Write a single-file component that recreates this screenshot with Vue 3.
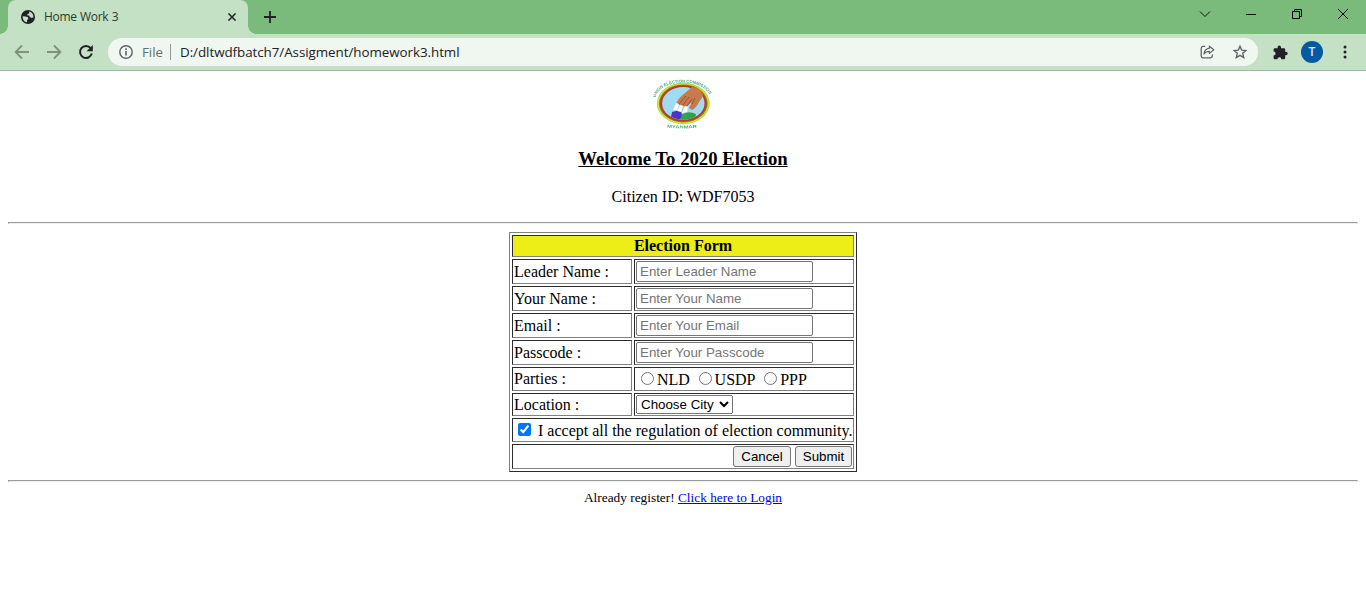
<script setup>
import { ref } from 'vue'

const fields = [
  { label: 'Leader Name :', hint: 'Enter Leader Name', type: 'text' },
  { label: 'Your Name :', hint: 'Enter Your Name', type: 'text' },
  { label: 'Email :', hint: 'Enter Your Email', type: 'email' },
  { label: 'Passcode :', hint: 'Enter Your Passcode', type: 'password' },
]
const parties = ['NLD', 'USDP', 'PPP']
const accepted = ref(true)
</script>

<template>
  <div class="window">
    <header class="tabstrip">
      <div class="tab">
        <svg class="globe" width="14" height="14" viewBox="0 0 14 14">
          <circle cx="7" cy="7" r="7" fill="#202124" />
          <path d="M1.7 6.2 L4.8 6.4 L6.9 7.2 L7.4 9 L6.2 9.8 L6 12.3 C3.4 11.9 1.5 9.6 1.7 6.2Z" fill="#c5e1c5" />
          <path d="M8.2 1.6 C11 2.2 12.5 4.6 12.4 7.2 L10.8 8.1 L8.8 7 L8.2 5.6 L6.2 5.3 L6.4 3.9 L8.2 3.4Z" fill="#c5e1c5" />
        </svg>
        <span class="tab-title">Home Work 3</span>
        <svg class="close" width="8" height="8" viewBox="0 0 8 8"><path d="M.4 .4 7.6 7.6M7.6 .4 .4 7.6" stroke="#202124" stroke-width="1.5" /></svg>
      </div>
      <svg class="plus" width="12" height="12" viewBox="0 0 12 12"><path d="M6 0V12M0 6H12" stroke="#202124" stroke-width="1.8" /></svg>
      <div class="controls">
        <svg width="12" height="12" viewBox="0 0 12 12"><path d="M1 3.5 6 8.5 11 3.5" fill="none" stroke="#111" /></svg>
        <svg width="12" height="12" viewBox="0 0 12 12"><path d="M1 6.5H11" stroke="#000" /></svg>
        <svg width="12" height="12" viewBox="0 0 12 12"><path d="M1.5 3.5H8.5V10.5H1.5ZM3.5 3.5V1.5H10.5V8.5H8.5" fill="none" stroke="#000" /></svg>
        <svg width="12" height="12" viewBox="0 0 12 12"><path d="M1 1 11 11M11 1 1 11" stroke="#000" /></svg>
      </div>
    </header>

    <nav class="toolbar">
      <svg class="back" width="16" height="16" viewBox="0 0 16 16"><path d="M15 8H2M8 1.5 1.6 8 8 14.5" fill="none" stroke="#7f917f" stroke-width="1.8" /></svg>
      <svg class="forward" width="16" height="16" viewBox="0 0 16 16"><path d="M1 8H14M8 1.5 14.4 8 8 14.5" fill="none" stroke="#7f917f" stroke-width="1.8" /></svg>
      <svg class="reload" width="16" height="16" viewBox="0 0 16 16">
        <path d="M12.7 4.2A6 6 0 1 0 13.8 9.6" fill="none" stroke="#202124" stroke-width="2" />
        <path d="M14.8 1V7.2H8.6Z" fill="#202124" />
      </svg>
      <div class="address">
        <svg class="info" width="14" height="14" viewBox="0 0 14 14">
          <circle cx="7" cy="7" r="6.2" fill="none" stroke="#5f6368" stroke-width="1.4" />
          <path d="M7 6V10.6M7 3.3V4.9" stroke="#5f6368" stroke-width="1.6" />
        </svg>
        <span class="scheme">File</span>
        <i class="divider"></i>
        <span class="url">D:/dltwdfbatch7/Assigment/homework3.html</span>
        <svg class="share" width="15" height="14" viewBox="0 0 15 14">
          <path d="M5.2 1.4H3A1.9 1.9 0 0 0 1.2 3.2V11A1.9 1.9 0 0 0 3 12.8H10.6A1.9 1.9 0 0 0 12.4 11V9.6" fill="none" stroke="#5f6368" stroke-width="1.3" />
          <path d="M9.4 1.2 13.8 4.8 9.4 8.4V6.4C6.9 6.3 5.2 7.2 4 9 4.4 5.8 6 3.6 9.4 3.2Z" fill="none" stroke="#5f6368" stroke-width="1.2" stroke-linejoin="round" />
        </svg>
        <svg class="star" width="14" height="14" viewBox="0 0 14 14"><path d="M7 1.2 8.7 5.1 13 5.5 9.7 8.3 10.7 12.5 7 10.3 3.3 12.5 4.3 8.3 1 5.5 5.3 5.1Z" fill="none" stroke="#5f6368" stroke-width="1.4" /></svg>
      </div>
      <svg class="puzzle" width="15" height="15" viewBox="0 0 15 15">
        <path d="M1.6 3.2H4.6V2.2A1.7 1.7 0 0 1 8 2.2V3.2H11A1.2 1.2 0 0 1 12.2 4.4V6.8H13A1.7 1.7 0 0 1 13 10.2H12.2V13A1.2 1.2 0 0 1 11 14.2H8.4A2 2 0 0 0 4.4 14.2H1.8A1.2 1.2 0 0 1 .6 13V10.6A2 2 0 0 0 .6 6.6V4.4A1.2 1.2 0 0 1 1.6 3.2Z" fill="#202124" />
      </svg>
      <span class="avatar">T</span>
      <svg class="menu" width="4" height="14" viewBox="0 0 4 14"><circle cx="2" cy="2" r="1.5" /><circle cx="2" cy="7" r="1.5" /><circle cx="2" cy="12" r="1.5" /></svg>
    </nav>

    <main class="page">
      <svg class="logo" width="60" height="50" viewBox="0 0 60 50">
        <defs>
          <path id="arc-top" d="M2.5 18.5 C7 -1.5 53 -1.5 57.5 18.5" />
          <path id="arc-bottom" d="M14 48.4 Q30 50.4 46 48.4" />
          <clipPath id="disc"><ellipse cx="30.3" cy="24.4" rx="21.2" ry="16.4" /></clipPath>
        </defs>
        <ellipse cx="30.3" cy="24.4" rx="26.4" ry="20.8" fill="#a5d653" />
        <ellipse cx="30.3" cy="24.4" rx="25.6" ry="20" fill="#e3e52c" />
        <ellipse cx="30.3" cy="24.4" rx="24.4" ry="19" fill="#6f9a24" />
        <ellipse cx="30.3" cy="24.4" rx="23.4" ry="18.2" fill="#c4362a" />
        <ellipse cx="30.3" cy="24.4" rx="21.2" ry="16.4" fill="#9fdcf2" />
        <g clip-path="url(#disc)">
          <path d="M27 42 28 36 Q35 31 43 35 L42 41Z" fill="#32a24a" />
          <path d="M19 33 27 31 29 35 27 41 18 38Z" fill="#4a35c4" />
        </g>
        <path d="M39 8 Q43 8 47 11 L50 15 Q49 20 46 23 Q44 28 39 31 L36 29 39 23 33 28 30 27 26 26 23 25 Q26 18 32 14Z" fill="#c87a4c" />
        <path d="M33 17 26 25M36 18 30 26M39 20 34 27M42 19 39 25" fill="none" stroke="#8d5030" stroke-width=".9" />
        <path d="M23 24 26 25 24 31 20 31ZM27 26 30 27 28 33 24 32ZM32 27 35 28 34 33 29 34Z" fill="#fff" />
        <text class="seal"><textPath href="#arc-top" textLength="64" lengthAdjust="spacingAndGlyphs">UNION ELECTION COMMISSION</textPath></text>
        <text class="seal"><textPath href="#arc-bottom" textLength="30" lengthAdjust="spacingAndGlyphs">MYANMAR</textPath></text>
      </svg>
      <h3>Welcome To 2020 Election</h3>
      <p class="citizen">Citizen ID: WDF7053</p>
      <hr class="rule">
      <table>
        <colgroup><col class="names"><col></colgroup>
        <tbody>
          <tr class="heading"><th colspan="2">Election Form</th></tr>
          <tr v-for="field in fields" :key="field.label" class="field">
            <td>{{ field.label }}</td>
            <td><input class="entry" :type="field.type" :placeholder="field.hint"></td>
          </tr>
          <tr class="parties">
            <td>Parties :</td>
            <td>
              <div class="options">
                <label v-for="party in parties" :key="party"><input type="radio" name="party" :value="party"><span>{{ party }}</span></label>
              </div>
            </td>
          </tr>
          <tr class="location">
            <td>Location :</td>
            <td><select><option>Choose City</option></select></td>
          </tr>
          <tr class="accept">
            <td colspan="2"><label class="terms"><input v-model="accepted" type="checkbox"><span>I accept all the regulation of election community.</span></label></td>
          </tr>
          <tr class="actions">
            <td colspan="2"><div class="buttons"><button class="cancel">Cancel</button><button class="submit">Submit</button></div></td>
          </tr>
        </tbody>
      </table>
      <hr class="rule second">
      <p class="login">Already register! <a href="#">Click here to Login</a></p>
    </main>
  </div>
</template>

<style>
body { margin: 0; background: #fff; }
</style>

<style scoped>
.window { height: 613px; overflow: hidden; background: #fff; font-family: "Liberation Serif", serif; color: #000; }
svg { display: block; flex: none; }
.tabstrip { height: 34px; background: #7abb7b; display: flex; align-items: center; font-family: "Open Sans", sans-serif; }
.tab { position: relative; box-sizing: border-box; width: 240px; height: 34px; margin-left: 8px; padding: 0 12px 0 13px; display: flex; align-items: center; background: #c5e1c5; border-radius: 8px 8px 0 0; }
.tab::before, .tab::after { content: ""; position: absolute; bottom: 0; width: 8px; height: 8px; }
.tab::before { left: -8px; background: radial-gradient(circle at 0 0, #7abb7b 7.5px, #c5e1c5 8px); }
.tab::after { right: -8px; background: radial-gradient(circle at 100% 0, #7abb7b 7.5px, #c5e1c5 8px); }
.tab-title { margin-left: 9px; font-size: 12px; letter-spacing: -.32px; word-spacing: .6px; line-height: 16px; color: #2d392d; flex: 1; }
.plus { margin-left: 16px; }
.controls { margin-left: auto; margin-right: 17px; margin-bottom: 6px; display: flex; gap: 34px; }
.toolbar { box-sizing: border-box; height: 37px; display: flex; align-items: center; background: #c5e1c5; border-bottom: 1px solid #a0b7a0; font-family: "Open Sans", sans-serif; }
.back { margin-left: 14px; }
.forward { margin-left: 16px; }
.reload { margin-left: 16px; }
.address { box-sizing: border-box; width: 1150px; height: 28px; margin-left: 14px; padding: 0 11px; display: flex; align-items: center; background: #f0f7f0; border-radius: 14px; }
.scheme { margin-left: 9px; width: 21px; font-size: 13.3px; color: #667069; }
.divider { width: 1px; height: 16px; margin: 0 9px 0 7px; background: #929c94; }
.url { font-size: 13.4px; letter-spacing: -.06px; color: #202124; white-space: nowrap; }
.share { margin-left: auto; }
.star { margin-left: 18px; }
.puzzle { margin-left: 15px; }
.avatar { width: 22px; height: 22px; margin-left: 13px; border-radius: 50%; background: #0459a3; color: #dce9f4; font: 500 12px/22px Roboto, sans-serif; text-align: center; }
.menu { margin-left: 20px; fill: #202124; }
.page { padding: 8px 8px 0; display: flex; flex-direction: column; align-items: center; }
.logo { filter: blur(.5px); }
.seal { font: bold 4.2px "Liberation Sans", sans-serif; fill: #4fa87c; }
h3 { margin: 19px 0 0; font-size: 18.72px; line-height: 22px; text-decoration: underline; }
.citizen { margin: 18px 0 0; font-size: 16px; line-height: 18px; }
.rule { box-sizing: border-box; width: 1350px; height: 2px; margin: 16px 0 0; border: 1px solid; border-color: #9a9a9a #eee #eee #9a9a9a; }
table { box-sizing: border-box; width: 348px; height: 240px; margin-top: 8px; table-layout: fixed; border: 1px solid; border-color: #808080 #2c2c2c #2c2c2c #808080; border-spacing: 2px; border-collapse: separate; }
.names { width: 120px; }
th, td { box-sizing: border-box; padding: 1px; border: 1px solid; border-color: #2c2c2c #808080 #808080 #2c2c2c; font-size: 16px; line-height: 18px; white-space: nowrap; }
.heading th { height: 22px; background: #eded17; }
.field td { height: 25px; }
.parties td { height: 24px; }
.location td { height: 23px; }
.accept td { height: 24px; }
.actions td { height: 25px; }
input, select, button { box-sizing: border-box; font: 13.333px "Liberation Sans", Arial, sans-serif; }
.entry { display: block; width: 177px; height: 21px; margin: 0; padding: 1px 3px; border: 1px solid #767676; border-radius: 2px; background: #fff; }
.entry::placeholder { color: #757575; }
.options { display: flex; }
.options label { display: flex; align-items: center; margin-right: 3.7px; }
.options span { padding-top: 1px; margin-bottom: -1px; }
.options input { width: 13px; height: 13px; margin: 0 3px 1px 5px; }
select { display: block; width: 97px; height: 19px; margin: 0; }
.terms { display: flex; align-items: center; }
.terms span { padding-top: 1px; margin-bottom: -1px; }
.terms input { width: 13px; height: 13px; margin: 0 7px 1px 4px; }
.buttons { display: flex; justify-content: flex-end; gap: 4px; }
button { height: 21px; padding: 0; border: 1px solid #767676; border-radius: 3px; background: #efefef; color: #000; }
.cancel { width: 58px; }
.submit { width: 57px; }
.second { margin-top: 8px; }
.login { margin: 8px 0 0; font-size: 13.333px; line-height: 16px; }
.login a { color: #00e; text-decoration: underline; }
</style>
